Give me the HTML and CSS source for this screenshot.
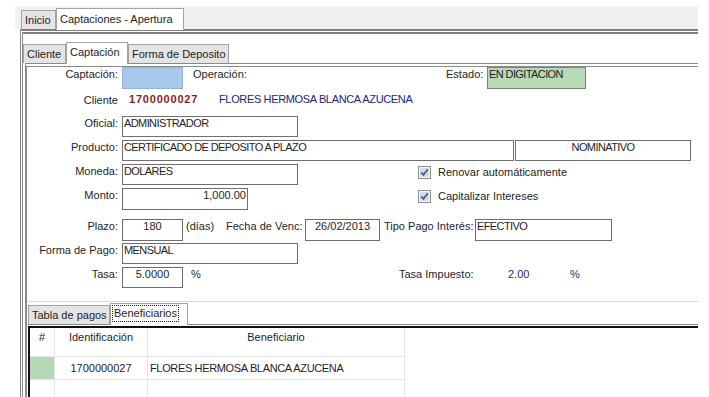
FILE: index.html
```
<!DOCTYPE html>
<html lang="es">
<head>
    <meta charset="UTF-8">
    <title>Captaciones - Apertura</title>
    <link rel="stylesheet" href="styles.css">
</head>
<body>
    <div class="app">
        <!-- MAIN TABS -->
        <div class="topbar">
            <div class="tab tab--inicio">Inicio</div>
            <div class="tab tab--active tab--apertura">Captaciones - Apertura</div>
        </div>

        <div class="frame">
            <div class="subtabs">
                <div class="tab tab--cliente">Cliente</div>
                <div class="tab tab--active tab--captacion">Captación</div>
                <div class="tab tab--forma">Forma de Deposito</div>
            </div>

            <div class="panel">
                <!-- FORM -->
                <div class="form">
                    <div class="row row--1">
                        <span class="label">Captación:</span>
                        <span class="box box--short box--blue"></span>
                        <span class="text text--operacion">Operación:</span>
                        <span class="text text--estado">Estado:</span>
                        <span class="box box--estado box--green caps">EN DIGITACION</span>
                    </div>
                    <div class="row row--2">
                        <span class="label">Cliente</span>
                        <span class="code">1700000027</span>
                        <span class="name">FLORES HERMOSA BLANCA AZUCENA</span>
                    </div>
                    <div class="row row--3">
                        <span class="label">Oficial:</span>
                        <span class="box box--mid caps">ADMINISTRADOR</span>
                    </div>
                    <div class="row row--4">
                        <span class="label">Producto:</span>
                        <span class="box box--producto caps">CERTIFICADO DE DEPOSITO A PLAZO</span>
                        <span class="box box--nominativo caps">NOMINATIVO</span>
                    </div>
                    <div class="row row--5">
                        <span class="label">Moneda:</span>
                        <span class="box box--mid caps">DOLARES</span>
                        <span class="check check--renovar">
                            <svg class="check__box" width="13" height="13" viewBox="0 0 13 13">
                                <rect x="0.5" y="0.5" width="12" height="12" fill="#f4f6f8" stroke="#8e8f8f"/>
                                <rect x="2" y="2" width="9" height="9" fill="#d5dde8"/>
                                <path d="M3.2 6.4 L5.4 8.9 L9.8 3.4" fill="none" stroke="#4b5f86" stroke-width="1.7"/>
                            </svg>
                            Renovar automáticamente
                        </span>
                    </div>
                    <div class="row row--6">
                        <span class="label">Monto:</span>
                        <span class="box box--monto">1,000.00</span>
                        <span class="check check--capitalizar">
                            <svg class="check__box" width="13" height="13" viewBox="0 0 13 13">
                                <rect x="0.5" y="0.5" width="12" height="12" fill="#f4f6f8" stroke="#8e8f8f"/>
                                <rect x="2" y="2" width="9" height="9" fill="#d5dde8"/>
                                <path d="M3.2 6.4 L5.4 8.9 L9.8 3.4" fill="none" stroke="#4b5f86" stroke-width="1.7"/>
                            </svg>
                            Capitalizar Intereses
                        </span>
                    </div>
                    <div class="row row--7">
                        <span class="label">Plazo:</span>
                        <span class="box box--short box--center">180</span>
                        <span class="text text--dias">(días)</span>
                        <span class="text text--fecha">Fecha de Venc:</span>
                        <span class="box box--fecha box--center">26/02/2013</span>
                        <span class="text text--tipo">Tipo Pago Interés:</span>
                        <span class="box box--tipo caps">EFECTIVO</span>
                    </div>
                    <div class="row row--8">
                        <span class="label">Forma de Pago:</span>
                        <span class="box box--mid caps">MENSUAL</span>
                    </div>
                    <div class="row row--9">
                        <span class="label">Tasa:</span>
                        <span class="box box--short box--center">5.0000</span>
                        <span class="text text--pct">%</span>
                        <span class="text text--impuesto">Tasa Impuesto:</span>
                        <span class="text text--imp-val">2.00</span>
                        <span class="text text--imp-pct">%</span>
                    </div>
                </div>

                <!-- LOWER TABS -->
                <div class="subtabs subtabs--bottom">
                    <div class="tab tab--pagos">Tabla de pagos</div>
                    <div class="tab tab--active tab--benef"><span class="focus">Beneficiarios</span></div>
                </div>

                <div class="grid-wrap">
                    <div class="grid">
                        <div class="cell cell--head">#</div>
                        <div class="cell cell--head">Identificación</div>
                        <div class="cell cell--head">Beneficiario</div>
                        <div class="cell cell--head cell--fill"></div>

                        <div class="cell cell--row cell--sel"></div>
                        <div class="cell cell--row">1700000027</div>
                        <div class="cell cell--row cell--left">FLORES HERMOSA BLANCA AZUCENA</div>
                        <div class="cell cell--row cell--fill"></div>

                        <div class="cell cell--empty"></div>
                        <div class="cell cell--empty"></div>
                        <div class="cell cell--empty"></div>
                        <div class="cell cell--empty cell--fill"></div>
                    </div>
                </div>
            </div>
        </div>
    </div>
</body>
</html>
```

FILE: styles.css
```
html, body {
    margin: 0;
    height: 100%;
    overflow: hidden;
    background-color: #fff;
}

body {
    font-family: "Liberation Sans", Arial, sans-serif;
    font-size: 11px;
    color: #1e1e1e;
}

.app {
    margin: 6px 11px 0 15px;
}

/* tabs */
.topbar {
    height: 23px;
    background-color: #f0f0f0;
    display: flex;
    align-items: flex-end;
    padding-left: 6px;
}
.tab {
    box-sizing: border-box;
    height: 19px;
    line-height: 18px;
    padding: 0 3px;
    border: 1px solid #a3a3a3;
    border-bottom: 0;
    background-color: #e4e4e4;
    white-space: nowrap;
}
.tab--active {
    height: 22px;
    background-color: #fff;
    margin-bottom: -1px;
    position: relative;
    z-index: 1;
}
.tab--inicio { width: 35px; }
.tab--apertura { width: 128px; line-height: 20px; }
.tab--cliente { width: 43px; }
.tab--captacion { width: 62px; }
.tab--forma { width: 101px; }
.tab--pagos { width: 82px; }
.tab--benef { width: 78px; padding: 0 2px; }

.focus {
    display: inline-block;
    line-height: 15px;
    padding: 0 1px;
    margin-top: 1px;
    outline: 1px dotted #222;
}

.frame {
    margin-left: 5px;
    border-top: 5px double #7f7f7f;
    border-left: 3px double #8a8a8a;
}
.subtabs {
    height: 29px;
    display: flex;
    align-items: flex-end;
}
.subtabs--bottom {
    height: 22px;
    padding-left: 1px;
}

.panel {
    margin-left: 2px;
    border-left: 2px solid #8c8c8c;
    border-top: 4px double #8a8a8a;
}

/* form */
.form {
    padding-bottom: 13px;
    border-bottom: 1px solid #dadada;
}
.row {
    display: flex;
    align-items: flex-start;
}
.row--1 { height: 22px; }
.row--2 { height: 13px; margin-top: 4px; }
.row--3 { height: 21px; margin-top: 10px; }
.row--4 { height: 21px; margin-top: 3px; }
.row--5 { height: 21px; margin-top: 3px; }
.row--6 { height: 22px; margin-top: 3px; }
.row--7 { height: 22px; margin-top: 9px; }
.row--8 { height: 21px; margin-top: 2px; }
.row--9 { height: 21px; margin-top: 3px; }

.label {
    width: 91px;
    margin-right: 4px;
    text-align: right;
    line-height: 13px;
    padding-top: 1px;
    flex: none;
}
.text {
    line-height: 13px;
    padding-top: 1px;
    flex: none;
    white-space: nowrap;
}

.box {
    box-sizing: border-box;
    height: 100%;
    border: 1px solid #6e6e6e;
    background-color: #fff;
    padding: 0 1px;
    line-height: 13px;
    white-space: nowrap;
    overflow: hidden;
    flex: none;
}
.caps { letter-spacing: -0.6px; }
.box--center { text-align: center; }
.box--short { width: 61px; }
.box--mid { width: 176px; }
.box--monto { width: 126px; text-align: right; }
.box--producto { width: 392px; }
.box--nominativo { width: 176px; margin-left: 1px; text-align: center; }
.box--fecha { width: 75px; }
.box--tipo { width: 137px; }
.box--estado { width: 99px; }
.box--blue {
    background-color: #a8c8ee;
    border-color: #93b3da;
}
.box--green {
    background-color: #b7d9b5;
    border-color: #6f8c6f;
}

.text--operacion { width: 253px; margin-left: 10px; }
.text--estado { width: 41px; }
.text--dias { width: 40px; margin-left: 3px; }
.text--fecha { width: 79px; }
.text--tipo { width: 91px; margin-left: 4px; }
.text--pct { width: 208px; margin-left: 8px; }
.text--impuesto { width: 109px; }
.text--imp-val { width: 62px; color: #1f2a6e; }
.text--imp-pct { color: #1f2a6e; }

.code {
    width: 90px;
    padding-left: 7px;
    box-sizing: border-box;
    font-weight: bold;
    letter-spacing: 0.8px;
    color: #8a1c1c;
    line-height: 13px;
    flex: none;
}
.code + .name { margin-left: 7px; }
.name {
    color: #1f2478;
    letter-spacing: -0.35px;
    line-height: 13px;
    white-space: nowrap;
}

.check {
    display: flex;
    align-items: center;
    gap: 7px;
    height: 13px;
    margin-top: 2px;
    line-height: 13px;
    white-space: nowrap;
}
.check__box { display: block; flex: none; }
.check--renovar { margin-left: 120px; }
.check--capitalizar { margin-left: 170px; }

/* beneficiarios grid */
.grid-wrap {
    margin-left: 1px;
    border-top: 1px solid #8a8a8a;
    padding-top: 1px;
}
.grid {
    display: grid;
    grid-template-columns: 25px 93px 257px 1fr;
    border-top: 2px solid #111;
    border-left: 2px solid #111;
}
.cell {
    box-sizing: border-box;
    border-right: 1px solid #e4e4e4;
    border-bottom: 1px solid #e4e4e4;
    text-align: center;
    white-space: nowrap;
}
.cell--head {
    height: 29px;
    padding-top: 3px;
    line-height: 13px;
}
.cell--row {
    height: 23px;
    line-height: 22px;
}
.cell--empty {
    height: 40px;
    border-bottom: 0;
}
.cell--left {
    text-align: left;
    padding-left: 2px;
    letter-spacing: -0.35px;
}
.cell--sel {
    background-color: #b7d8b5;
}
.cell--fill {
    border-right: 0;
    border-bottom: 0;
}
```
